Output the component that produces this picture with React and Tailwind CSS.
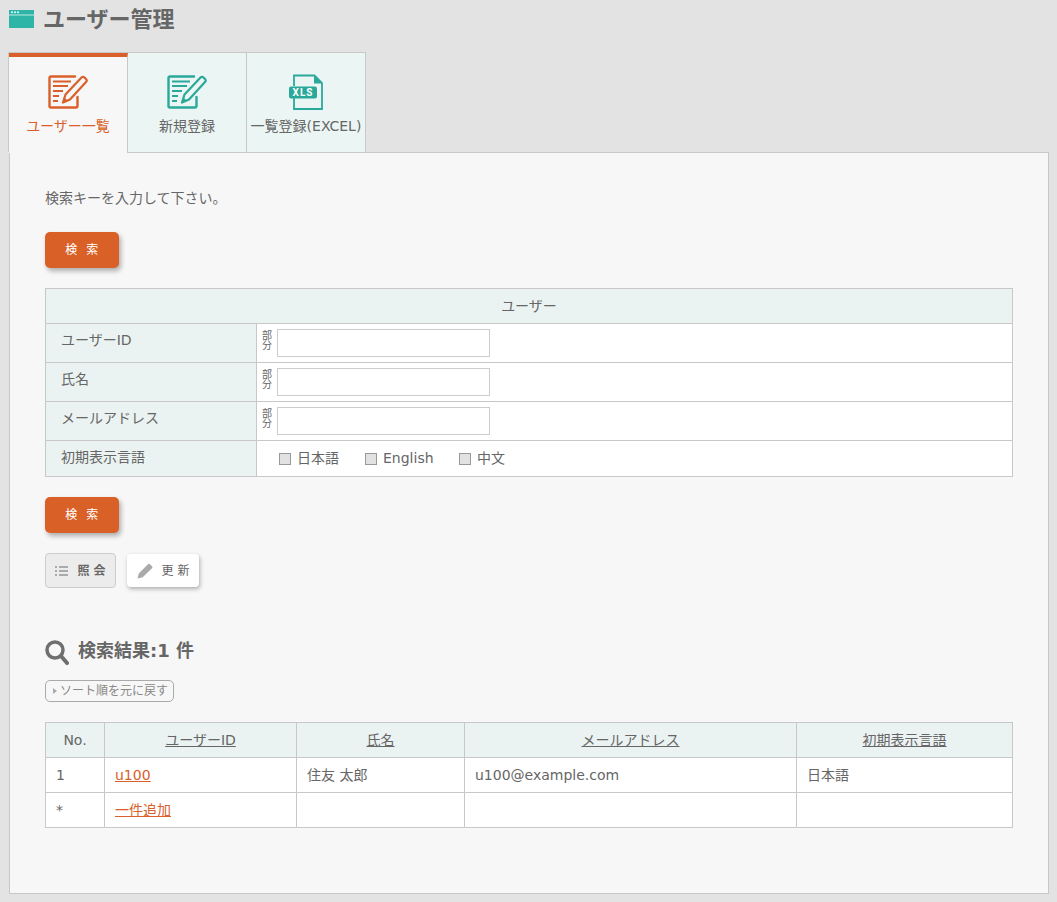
import React from 'react';

const EditIcon = ({ className }) => (
  <svg viewBox="0 0 40 34" className={className} fill="none" stroke="currentColor">
    <path d="M27 1.5H3A1.5 1.5 0 0 0 1.5 3v28A1.5 1.5 0 0 0 3 32.500h25a1.500 1.500 0 0 0 1.500-1.500v-9" strokeWidth="2.400" strokeLinecap="round" />
    <path d="M5 6.500h18M5 11h15M5 16h10M5 21h6M5 26h5" strokeWidth="2" />
    <path d="M15 27.500l2.500-8L33.500 2.500q1.500-1.500 3 0l1.500 1.500q1.500 1.500 0 3L22 24.500z" strokeWidth="2.200" strokeLinejoin="round" />
    <path d="M15 27.500l1.500-5 3.500 3.500z" fill="currentColor" stroke="none" />
  </svg>
);

const XlsIcon = ({ className }) => (
  <svg viewBox="0 0 34 36" className={className}>
    <path d="M5 12V1.500h20.500l7.500 7.500v26H5V24" fill="none" stroke="currentColor" strokeWidth="1.800" />
    <path d="M25 1l8.500 8.500H25z" fill="currentColor" />
    <rect x="0" y="12.500" width="28" height="12" rx="2" fill="currentColor" />
    <text x="14" y="22.300" textAnchor="middle" fill="#fff" fontSize="10" fontWeight="700" letterSpacing="1" fontFamily="Roboto, sans-serif">XLS</text>
  </svg>
);

const Tab = ({ active, icon, label }) => (
  <div className={`relative z-10 flex h-[100px] w-[119px] -mb-px flex-col items-center border-r border-[#c8c8c8] ${active ? 'border-t-[4px] border-t-[#d9602a] bg-[#f7f7f7] text-[#d9602a]' : 'border-b bg-[#ebf5f3] text-[#666]'}`}>
    <div className={`flex h-[37px] items-center ${active ? 'mt-[16px] text-[#d9602a]' : 'mt-[20px] text-[#2aa99b]'}`}>{icon}</div>
    <span className="mt-[6px] whitespace-nowrap text-[14px] leading-[20px]">{label}</span>
  </div>
);

const SearchButton = () => (
  <button className="block h-[36px] w-[74px] rounded-[5px] bg-[#d96027] text-[12px] tracking-[0.04em] text-white shadow-[2px_3px_5px_rgba(0,0,0,0.3)]">検&nbsp;&nbsp;索</button>
);

const PartInput = () => (
  <div className="flex items-start gap-[5px]">
    <span className="mt-[2px] w-[10px] text-center text-[10px] leading-[10px] text-[#666]">部<br />分</span>
    <input className="h-[28px] w-[213px] border border-[#ccc] bg-white" />
  </div>
);

const Check = ({ label, className }) => (
  <label className={`flex items-center gap-[6px] ${className}`}>
    <span className="h-[12px] w-[12px] border border-[#999] bg-[#e2e2e2]"></span>
    <span>{label}</span>
  </label>
);

const formRows = ['ユーザーID', '氏名', 'メールアドレス'];
const thCell = 'border border-[#c8c8c8] bg-[#ebf3f2] font-normal';
const tdCell = 'border border-[#c8c8c8] bg-white';

export default function App() {
  return (
    <div className="min-h-[902px] bg-[#e3e3e3] pl-[8px] pr-[8px] pb-[8px] text-[14px] text-[#666]" style={{ fontFamily: '"DejaVu Sans", "Noto Sans CJK JP", sans-serif' }}>
      <div className="flex h-[52px] items-start pl-[1px] pt-[10px]">
        <svg viewBox="0 0 25 18" className="h-[18px] w-[25px]">
          <rect width="25" height="18" fill="#2fb5a8" />
          <rect y="4.500" width="25" height="1" fill="#bfe9e4" />
          <circle cx="3" cy="2.300" r="1" fill="#dff" />
          <circle cx="6" cy="2.300" r="1" fill="#dff" />
          <circle cx="9" cy="2.300" r="1" fill="#dff" />
        </svg>
        <h1 className="ml-[9px] -mt-[4px] text-[22px] font-bold leading-[28px]">ユーザー管理</h1>
      </div>

      <div className="flex w-fit border-l border-t border-[#c8c8c8]">
        <Tab active icon={<EditIcon className="h-[34px] w-[40px]" />} label="ユーザー一覧" />
        <Tab icon={<EditIcon className="h-[34px] w-[40px]" />} label="新規登録" />
        <Tab icon={<XlsIcon className="h-[36px] w-[34px]" />} label="一覧登録(EXCEL)" />
      </div>

      <div className="ml-[1px] h-[742px] border border-[#c8c8c8] bg-[#f7f7f7] px-[35px] pt-[35px]">
        <p className="leading-[20px]">検索キーを入力して下さい。</p>
        <div className="mt-[24px]"><SearchButton /></div>

        <table className="mt-[20px] w-[968px] table-fixed border-collapse">
          <colgroup>
            <col className="w-[211px]" />
            <col />
          </colgroup>
          <thead>
            <tr className="h-[35px]">
              <th colSpan="2" className={thCell}>ユーザー</th>
            </tr>
          </thead>
          <tbody>
            {formRows.map((label) => (
              <tr key={label} className="h-[39px]">
                <td className={`${thCell} px-[15px] pb-[5px] align-top pt-[5px] leading-[22px]`}>{label}</td>
                <td className={`${tdCell} pl-[5px] align-middle`}><PartInput /></td>
              </tr>
            ))}
            <tr className="h-[36px]">
              <td className={`${thCell} px-[15px] pt-[5px] align-top leading-[22px]`}>初期表示言語</td>
              <td className={`${tdCell} pl-[22px]`}>
                <div className="flex items-center">
                  <Check label="日本語" className="w-[86px]" />
                  <Check label="English" className="w-[94px]" />
                  <Check label="中文" />
                </div>
              </td>
            </tr>
          </tbody>
        </table>

        <div className="mt-[20px]"><SearchButton /></div>

        <div className="mt-[20px] flex items-center gap-[11px]">
          <button className="flex h-[35px] w-[71px] items-center justify-center gap-[9px] rounded-[4px] border border-[#ccc] bg-[#ececec] text-[12px] font-bold">
            <svg viewBox="0 0 13 12" className="h-[12px] w-[13px]" fill="#aaa">
              <rect x="0" y="1" width="2" height="2" /><rect x="4" y="1" width="9" height="2" />
              <rect x="0" y="5" width="2" height="2" /><rect x="4" y="5" width="9" height="2" />
              <rect x="0" y="9" width="2" height="2" /><rect x="4" y="9" width="9" height="2" />
            </svg>
            照 会
          </button>
          <button className="flex h-[33px] w-[72px] items-center justify-center gap-[9px] rounded-[4px] bg-white text-[12px] shadow-[1px_2px_4px_rgba(0,0,0,0.3)]">
            <svg viewBox="0 0 16 16" className="h-[16px] w-[16px]" fill="#aaa">
              <path d="M0.500 15.500l1.200-5L11 1.200q1-1 2 0l2 2q1 1 0 2L5.700 14.300z" />
            </svg>
            更 新
          </button>
        </div>

        <div className="mt-[52px] flex items-center">
          <svg viewBox="0 0 24 25" className="h-[25px] w-[24px]" fill="none" stroke="#6f6f6f">
            <circle cx="10" cy="10" r="8" strokeWidth="3.500" />
            <path d="M16 16l6 7" strokeWidth="4" strokeLinecap="round" />
          </svg>
          <h2 className="ml-[9px] -mt-[3px] text-[18px] font-bold leading-[24px]">検索結果:1 件</h2>
        </div>

        <button className="mt-[15px] flex h-[22px] w-[129px] items-center rounded-[5px] border border-[#aaa] pl-[7px] text-[12px] text-[#888]">
          <span className="mr-[3px] h-0 w-0 border-y-[3px] border-l-[4px] border-y-transparent border-l-[#aaa]"></span>
          ソート順を元に戻す
        </button>

        <table className="mt-[20px] w-[968px] table-fixed border-collapse">
          <colgroup>
            <col className="w-[59px]" />
            <col className="w-[192px]" />
            <col className="w-[168px]" />
            <col className="w-[332px]" />
            <col />
          </colgroup>
          <thead>
            <tr className="h-[35px]">
              <th className={thCell}>No.</th>
              <th className={`${thCell} underline`}>ユーザーID</th>
              <th className={`${thCell} underline`}>氏名</th>
              <th className={`${thCell} underline`}>メールアドレス</th>
              <th className={`${thCell} underline`}>初期表示言語</th>
            </tr>
          </thead>
          <tbody>
            <tr className="h-[35px]">
              <td className={`${tdCell} px-[10px]`}>1</td>
              <td className={`${tdCell} px-[10px] text-[#d9602a] underline`}>u100</td>
              <td className={`${tdCell} px-[10px]`}>住友 太郎</td>
              <td className={`${tdCell} px-[10px]`}>u100@example.com</td>
              <td className={`${tdCell} px-[10px]`}>日本語</td>
            </tr>
            <tr className="h-[35px]">
              <td className={`${tdCell} px-[10px]`}>*</td>
              <td className={`${tdCell} px-[10px] text-[#d9602a] underline`}>一件追加</td>
              <td className={tdCell}></td>
              <td className={tdCell}></td>
              <td className={tdCell}></td>
            </tr>
          </tbody>
        </table>
      </div>
    </div>
  );
}
